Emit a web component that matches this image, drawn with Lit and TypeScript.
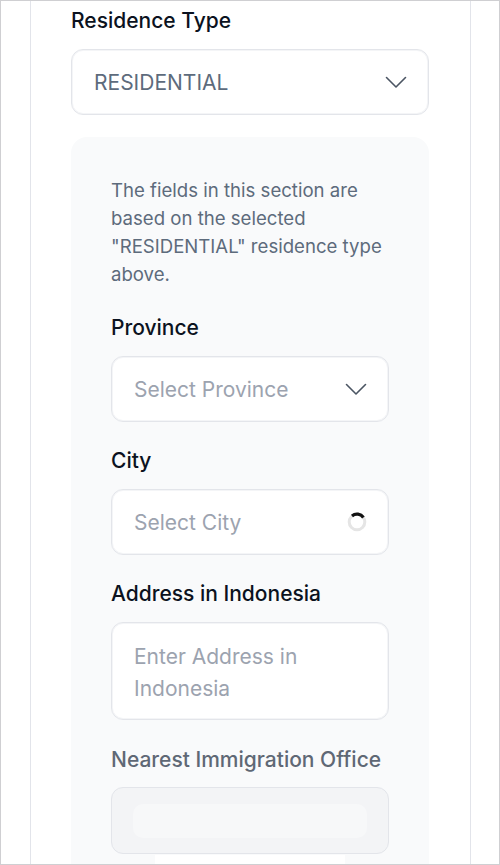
import { LitElement, html, css, svg } from "lit";
import { customElement } from "lit/decorators.js";

const chevron = svg`<svg class="chev" width="24" height="24" viewBox="0 0 24 24" fill="none" stroke="#4b5563" stroke-width="1.6" stroke-linecap="round" stroke-linejoin="round"><path d="M2.5 7.5 12 17l9.5-9.5"/></svg>`;

@customElement("app-root")
export class AppRoot extends LitElement {
  static styles = css`
    :host {
      display: block;
      width: 500px;
      height: 865px;
      box-sizing: border-box;
      border: 1px solid #cfcfd2;
      overflow: hidden;
      background: #fff;
      font-family: Inter, "Liberation Sans", sans-serif;
    }
    .card {
      box-sizing: border-box;
      width: 441px;
      height: 100%;
      margin-left: 29px;
      border-left: 1px solid #e2e4ea;
      border-right: 1px solid #e2e4ea;
      padding: 5px 41px 0 40px;
    }
    .label {
      font-size: 21px;
      line-height: 28px;
      padding-top: 1px;
      font-weight: 500;
      color: #0b1220;
    }
    .label.muted { color: #5f6875; }
    .field {
      box-sizing: border-box;
      width: 100%;
      height: 66px;
      margin-top: 14px;
      border: 1px solid #e3e5ea;
      box-shadow: inset 0 0 0 1px #f4f5f7;
      border-radius: 12px;
      background: #fff;
      padding: 0 20px 0 22px;
      display: flex;
      align-items: center;
      justify-content: space-between;
      font-size: 21px;
      color: #9ca3af;
    }
    .field.value { color: #5d6b7c; }
    .panel {
      margin-top: 22px;
      background: #f9fafb;
      border-radius: 16px;
      padding: 39px 40px 0;
      height: 760px;
    }
    .hint {
      margin: 0 0 25px;
      font-size: 18.6px;
      line-height: 28px;
      color: #5d6b7c;
    }
    .group { margin-bottom: 24px; }
    .group.address { margin-bottom: 25px; }
    .field.tall {
      height: 98px;
      align-items: flex-start;
      padding-top: 18px;
      line-height: 32px;
    }
    .field.disabled {
      height: 67px;
      margin-top: 13px;
      background: #f3f4f6;
      box-shadow: none;
      padding: 16px 21px;
    }
    .skeleton {
      width: 100%;
      height: 34px;
      border-radius: 10px;
      background: #f7f8f9;
    }
    .below {
      width: 190px;
      height: 20px;
      margin: -23px auto 0;
      background: #fff;
    }
    .spin { display: block; margin-right: 1px; }
  `;

  render() {
    return html`
      <div class="card">
        <div class="label">Residence Type</div>
        <div class="field value"><span>RESIDENTIAL</span>${chevron}</div>
        <div class="panel">
          <p class="hint">The fields in this section are based on the selected "RESIDENTIAL" residence type above.</p>
          <div class="group">
            <div class="label">Province</div>
            <div class="field"><span>Select Province</span>${chevron}</div>
          </div>
          <div class="group">
            <div class="label">City</div>
            <div class="field">
              <span>Select City</span>
              <svg class="spin" width="20" height="20" viewBox="0 0 20 20" fill="none">
                <circle cx="10" cy="10" r="7.8" stroke="#e5e5e5" stroke-width="3"/>
                <path d="M5 3.9A7.8 7.8 0 0 1 16.4 5.5" stroke="#111" stroke-width="3.2"/>
              </svg>
            </div>
          </div>
          <div class="group address">
            <div class="label">Address in Indonesia</div>
            <div class="field tall"><span>Enter Address in Indonesia</span></div>
          </div>
          <div class="group">
            <div class="label muted">Nearest Immigration Office</div>
            <div class="field disabled"><div class="skeleton"></div></div>
          </div>
          <div class="below"></div>
        </div>
      </div>
    `;
  }
}
